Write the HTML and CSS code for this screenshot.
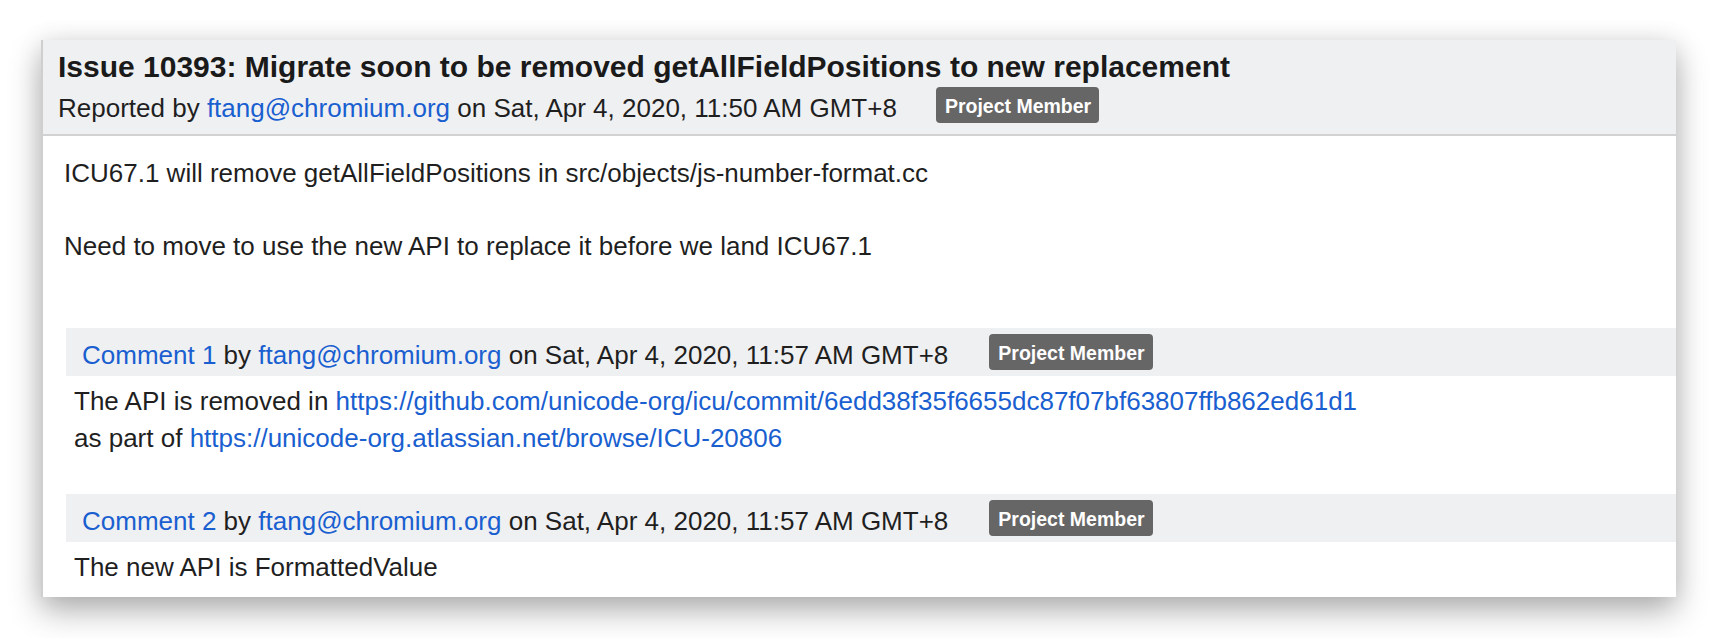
FILE: index.html
```html
<!DOCTYPE html>
<html lang="en">
<head>
<meta charset="utf-8">
<title>Issue 10393</title>
<link rel="stylesheet" href="styles.css">
</head>
<body>
<div class="card">
  <header class="issue-header">
    <h1 class="issue-title">Issue 10393: Migrate soon to be removed getAllFieldPositions to new replacement</h1>
    <div class="meta-row">
      <span class="meta-text">Reported by <a href="#">ftang@chromium.org</a> on Sat, Apr 4, 2020, 11:50 AM GMT+8</span>
      <span class="badge badge-header">Project Member</span>
    </div>
  </header>
  <div class="description">ICU67.1 will remove getAllFieldPositions in src/objects/js-number-format.cc<br><br>Need to move to use the new API to replace it before we land ICU67.1</div>
  <div class="comment comment-first">
    <div class="comment-header meta-row">
      <span class="meta-text"><a href="#">Comment 1</a> by <a href="#">ftang@chromium.org</a> on Sat, Apr 4, 2020, 11:57 AM GMT+8</span>
      <span class="badge badge-comment">Project Member</span>
    </div>
    <div class="comment-body">The API is removed in <a href="#">https://github.com/unicode-org/icu/commit/6edd38f35f6655dc87f07bf63807ffb862ed61d1</a><br>as part of <a href="#">https://unicode-org.atlassian.net/browse/ICU-20806</a></div>
  </div>
  <div class="comment comment-next">
    <div class="comment-header meta-row">
      <span class="meta-text"><a href="#">Comment 2</a> by <a href="#">ftang@chromium.org</a> on Sat, Apr 4, 2020, 11:57 AM GMT+8</span>
      <span class="badge badge-comment">Project Member</span>
    </div>
    <div class="comment-body">The new API is FormattedValue</div>
  </div>
</div>
</body>
</html>
```
FILE: styles.css
```css
html, body {
  margin: 0;
  padding: 0;
  background: #ffffff;
}

body {
  min-height: 638px;
  font-family: "Liberation Sans", Arial, Helvetica, sans-serif;
  font-size: 26px;
  color: #1f1f1f;
}

a {
  color: #1a5fd0;
  text-decoration: none;
}

.card {
  box-sizing: border-box;
  width: 1635px;
  margin: 40px 0 0 41px;
  background: #ffffff;
  border-left: 2px solid #cfcfcf;
  box-shadow: 0 14px 30px rgba(0, 0, 0, 0.3), 0 0 24px rgba(0, 0, 0, 0.08);
  padding-bottom: 12px;
}

.issue-header {
  background: #eff0f2;
  border-bottom: 2px solid #d2d2d3;
  padding: 9px 0 5px 15px;
}

.issue-title {
  margin: 0;
  font-size: 30px;
  line-height: 36px;
  font-weight: bold;
  color: #1a1a1a;
}

.meta-row {
  display: flex;
  align-items: flex-start;
}

.issue-header .meta-row {
  margin-top: 2px;
}

.meta-text {
  line-height: 42px;
  white-space: nowrap;
}

.badge {
  display: inline-block;
  background: #666666;
  color: #ffffff;
  font-weight: bold;
  font-size: 19.5px;
  line-height: 24px;
  padding: 7px 8px 5px 9px;
  border-radius: 4px;
}

.badge-header {
  margin-left: 39px;
}

.badge-comment {
  margin-left: 41px;
}

.description {
  padding: 19px 0 0 21px;
  line-height: 36.4px;
}

.comment {
  margin-left: 23px;
}

.comment-first {
  margin-top: 64px;
}

.comment-next {
  margin-top: 38px;
}

.comment-header {
  background: #eff0f2;
  padding: 6px 0 0 16px;
}

.comment-body {
  padding: 7px 0 0 8px;
  line-height: 36.4px;
}
```
